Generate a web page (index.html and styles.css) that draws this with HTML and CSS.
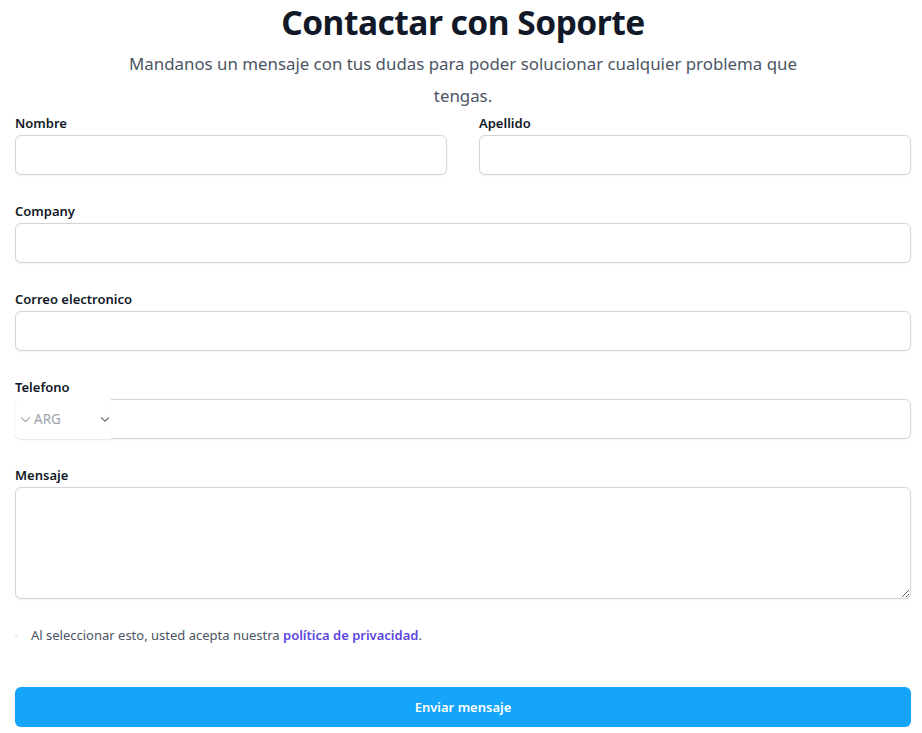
FILE: index.html
```html
<!DOCTYPE html>
<html lang="es">
<head>
<meta charset="utf-8">
<title>Contactar con Soporte</title>
<link rel="stylesheet" href="styles.css">
</head>
<body>
<main class="page">
  <header class="intro">
    <h2 class="title">Contactar con Soporte</h2>
    <p class="lead">Mandanos un mensaje con tus dudas para poder solucionar cualquier problema que tengas.</p>
  </header>
  <form class="form">
    <div class="field">
      <label class="label" for="nombre">Nombre</label>
      <input class="input" id="nombre" type="text">
    </div>
    <div class="field">
      <label class="label" for="apellido">Apellido</label>
      <input class="input" id="apellido" type="text">
    </div>
    <div class="field full">
      <label class="label" for="company">Company</label>
      <input class="input" id="company" type="text">
    </div>
    <div class="field full">
      <label class="label" for="email">Correo electronico</label>
      <input class="input" id="email" type="email">
    </div>
    <div class="field full">
      <label class="label" for="tel">Telefono</label>
      <div class="phone">
        <div class="country">
          <svg class="chev small" viewBox="0 0 12 8" width="11" height="7"><path d="M1 1.5l5 5 5-5" fill="none" stroke="currentColor" stroke-width="1.2"/></svg>
          <span class="code">ARG</span>
          <svg class="chev big" viewBox="0 0 12 8" width="10" height="7"><path d="M1.5 1.5l4.5 4.5 4.5-4.5" fill="none" stroke="currentColor" stroke-width="1.6"/></svg>
        </div>
        <input class="input" id="tel" type="tel">
      </div>
    </div>
    <div class="field full">
      <label class="label" for="msg">Mensaje</label>
      <textarea class="input area" id="msg" rows="4"></textarea>
    </div>
    <div class="agree full">
      <span class="dot"></span>
      <span class="agree-text">Al seleccionar esto, usted acepta nuestra <a class="link" href="#">política de privacidad</a>.</span>
    </div>
    <button class="submit full" type="button">Enviar mensaje</button>
  </form>
</main>
</body>
</html>
```
FILE: styles.css
```css
* { box-sizing: border-box; }
html, body { margin: 0; padding: 0; background: #fff; }
body {
  font-family: "Noto Sans", "Open Sans", sans-serif;
  color: #111827;
}
.page {
  width: 922px;
  padding: 0 11px 0 15px;
}
.intro {
  text-align: center;
  width: 690px;
  margin: 0 auto;
}
.title {
  margin: 0;
  padding-top: 2px;
  font-size: 33.5px;
  line-height: 40px;
  font-weight: 700;
  letter-spacing: -0.5px;
  color: #111827;
}
.lead {
  margin: 6px 0 0;
  font-size: 16.85px;
  line-height: 32px;
  color: #4b5563;
}
.form {
  display: grid;
  grid-template-columns: 432px 432px;
  column-gap: 32px;
  row-gap: 24px;
  margin-top: -1px;
}
.full { grid-column: 1 / -1; }
.field { display: flex; flex-direction: column; }
.label {
  font-size: 13px;
  line-height: 24px;
  font-weight: 600;
  color: #111827;
}
.input {
  display: block;
  width: 100%;
  height: 40px;
  border: 1px solid #d1d5db;
  border-radius: 6px;
  background: #fff;
  font: inherit;
  padding: 8px 14px;
  box-shadow: 0 1px 2px rgba(0,0,0,0.05);
}
.area { height: 112px; resize: vertical; }
.phone { position: relative; }
.country {
  position: absolute;
  left: 0; top: 0;
  width: 96px;
  height: 40px;
  background: #fff;
  border-radius: 6px 0 0 6px;
  box-shadow: 0 1px 2px rgba(0,0,0,0.06), -1px 0 1px rgba(0,0,0,0.02);
  display: flex;
  align-items: center;
  padding-left: 5px;
  color: #9ca3af;
}
.chev.small { color: #9ca3af; margin-right: 3px; }
.code { font-size: 13.5px; color: #9ca3af; }
.chev.big { color: #6b7280; margin-left: auto; margin-right: 1px; }
.agree {
  display: flex;
  align-items: center;
  margin-top: 0;
  height: 24px;
}
.dot {
  width: 3px; height: 3px;
  background: #eef0f3;
  margin-right: 13px;
}
.agree-text {
  font-size: 13px;
  line-height: 24px;
  color: #4b5563;
}
.link {
  color: #5b45e0;
  font-weight: 600;
  text-decoration: none;
}
.submit {
  margin-top: 16px;
  height: 40px;
  border: 0;
  border-radius: 6px;
  background: #14a5fb;
  color: #fff;
  font: inherit;
  font-size: 13px;
  font-weight: 600;
  box-shadow: 0 1px 2px rgba(0,0,0,0.05);
}
```
